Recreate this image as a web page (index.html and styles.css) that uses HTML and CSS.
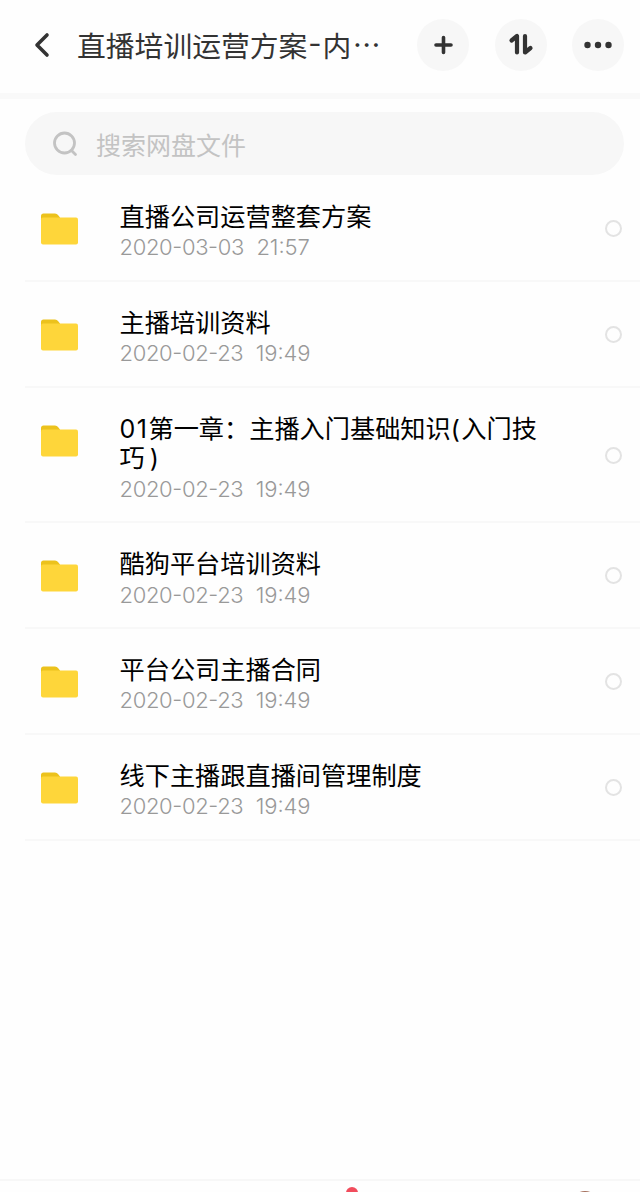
FILE: index.html
```html
<!DOCTYPE html>
<html lang="zh-CN">

<head>
  <meta charset="UTF-8">
  <title>直播培训运营方案</title>
  <link rel="stylesheet" href="styles.css">
</head>

<body>
  <svg class="symbols">
    <symbol id="folder" viewBox="0 0 38 32">
      <path d="M1 9V3Q1 0.5 3.5 0.5H15Q17 0.5 18 2L20 4.500V9Z" fill="#ecc21c" />
      <rect x="1" y="4.500" width="37" height="27" rx="2" fill="#fed63a" />
    </symbol>
  </svg>

  <header class="header">
    <svg class="back" width="16" height="26" viewBox="0 0 16 26">
      <path d="M13 3L3 13L13 23" />
    </svg>
    <h1 class="title">直播培训运营方案<span class="dash">-</span>内<span class="dots">···</span></h1>
    <div class="actions">
      <button class="action-btn">
        <svg width="52" height="52" viewBox="0 0 52 52">
          <path d="M26.500 18.500V33.500M19 26H34" />
        </svg>
      </button>
      <button class="action-btn">
        <svg class="sort" width="52" height="52" viewBox="0 0 52 52">
          <path d="M16.500 21.500L22 17V33.500M30 17V33.500L35.500 29" />
        </svg>
      </button>
      <button class="action-btn">
        <svg class="more" width="52" height="52" viewBox="0 0 52 52">
          <circle cx="15.500" cy="26" r="3.200" />
          <circle cx="26" cy="26" r="3.200" />
          <circle cx="36.500" cy="26" r="3.200" />
        </svg>
      </button>
    </div>
  </header>

  <div class="search">
    <svg class="search-icon" width="26" height="26" viewBox="0 0 26 26">
      <circle cx="12.500" cy="12" r="10" />
      <path d="M19.500 19.500L23.500 23.500" />
    </svg>
    <span>搜索网盘文件</span>
  </div>

  <ul class="files">
    <li class="file">
      <svg class="folder"><use href="#folder" /></svg>
      <div class="info">
        <div class="name">直播公司运营整套方案</div>
        <div class="date">2020-03-03<span class="time">21:57</span></div>
      </div>
      <span class="check"></span>
    </li>
    <li class="file">
      <svg class="folder"><use href="#folder" /></svg>
      <div class="info">
        <div class="name">主播培训资料</div>
        <div class="date">2020-02-23<span class="time">19:49</span></div>
      </div>
      <span class="check"></span>
    </li>
    <li class="file">
      <svg class="folder"><use href="#folder" /></svg>
      <div class="info">
        <div class="name"><span class="latin">01</span>第一章：主播入门基础知识<span class="latin">(</span>入门技<br>巧<span class="latin close">)</span></div>
        <div class="date">2020-02-23<span class="time">19:49</span></div>
      </div>
      <span class="check"></span>
    </li>
    <li class="file">
      <svg class="folder"><use href="#folder" /></svg>
      <div class="info">
        <div class="name">酷狗平台培训资料</div>
        <div class="date">2020-02-23<span class="time">19:49</span></div>
      </div>
      <span class="check"></span>
    </li>
    <li class="file">
      <svg class="folder"><use href="#folder" /></svg>
      <div class="info">
        <div class="name">平台公司主播合同</div>
        <div class="date">2020-02-23<span class="time">19:49</span></div>
      </div>
      <span class="check"></span>
    </li>
    <li class="file">
      <svg class="folder"><use href="#folder" /></svg>
      <div class="info">
        <div class="name">线下主播跟直播间管理制度</div>
        <div class="date">2020-02-23<span class="time">19:49</span></div>
      </div>
      <span class="check"></span>
    </li>
  </ul>

  <footer class="tabbar">
    <span class="badge"></span>
    <span class="avatar"></span>
  </footer>
</body>

</html>
```
FILE: styles.css
```css
* {
  box-sizing: border-box;
}

body {
  margin: 0;
  height: 1192px;
  display: flex;
  flex-direction: column;
  overflow: hidden;
  background-color: #fefefe;
  font-family: "Noto Sans CJK SC", sans-serif;
}

.symbols {
  display: none;
}

.header {
  display: flex;
  align-items: center;
  height: 99px;
  padding: 0 16px 3px 34px;
  border-bottom: 6px solid #f9f9f9;
  flex-shrink: 0;
}

.back {
  fill: none;
  stroke: #333;
  stroke-width: 3.6;
  stroke-linecap: round;
  stroke-linejoin: round;
}

.title {
  display: flex;
  width: 340px;
  margin: 0 0 0 27px;
  font-size: 28.8px;
  font-weight: 400;
  line-height: 40px;
  white-space: nowrap;
  color: #333;
}

.dash {
  width: 15px;
  text-align: center;
  font-family: Inter, sans-serif;
  font-feature-settings: "case";
}

.dots {
  font-family: Inter, sans-serif;
  margin-left: 2px;
  letter-spacing: 1px;
}

.actions {
  display: flex;
  gap: 25.5px;
}

.action-btn {
  width: 52px;
  height: 52px;
  padding: 0;
  border: none;
  border-radius: 50%;
  background-color: #f7f7f7;
}

.action-btn svg {
  display: block;
  fill: none;
  stroke: #333;
  stroke-width: 3.6;
  stroke-linecap: round;
  stroke-linejoin: round;
}

.action-btn .sort {
  stroke-width: 4.2;
}

.action-btn .more {
  fill: #333;
  stroke: none;
}

.search {
  display: flex;
  align-items: center;
  height: 63px;
  margin: 13px 16px 0 25px;
  padding: 0 27px;
  border-radius: 32px;
  background-color: #f7f7f7;
  color: #c3c3c3;
  font-size: 25px;
  flex-shrink: 0;
}

.search-icon {
  margin-right: 18px;
  fill: none;
  stroke: #c3c3c3;
  stroke-width: 2.8;
  stroke-linecap: round;
}

.files {
  margin: 1px 0 0 25px;
  padding: 0;
  list-style: none;
}

.file {
  display: flex;
  align-items: center;
  padding: 25px 18px 15.5px 15px;
  border-bottom: 2px solid #f8f8f8;
}

.folder {
  width: 38px;
  height: 32px;
  margin-top: 12px;
  align-self: flex-start;
}

.info {
  flex: 1;
  margin-left: 41.5px;
}

.name {
  font-size: 25.2px;
  line-height: 29.4px;
  color: #000;
}

.latin {
  font-family: Inter, sans-serif;
  font-size: 25px;
  line-height: 1;
  letter-spacing: 1.5px;
}

.close {
  margin-left: 5px;
}

.date {
  font-family: Inter, sans-serif;
  font-size: 22px;
  font-weight: 300;
  font-feature-settings: "case";
  line-height: 34px;
  letter-spacing: -0.35px;
  color: #999;
}

.time {
  margin-left: 12.5px;
  letter-spacing: -0.1px;
}

.check {
  width: 17px;
  height: 17px;
  margin-bottom: 8px;
  border: 2px solid #e3e3e3;
  border-radius: 50%;
}

.tabbar {
  position: relative;
  height: 13px;
  margin-top: auto;
  border-top: 2px solid #f7f7f7;
  overflow: hidden;
}

.badge {
  position: absolute;
  left: 346px;
  top: 6px;
  width: 12px;
  height: 12px;
  border-radius: 50%;
  background-color: #f14c5c;
}

.avatar {
  position: absolute;
  left: 571px;
  top: 9.5px;
  width: 28px;
  height: 28px;
  border-radius: 50%;
  background-color: #a56f5c;
}
```
